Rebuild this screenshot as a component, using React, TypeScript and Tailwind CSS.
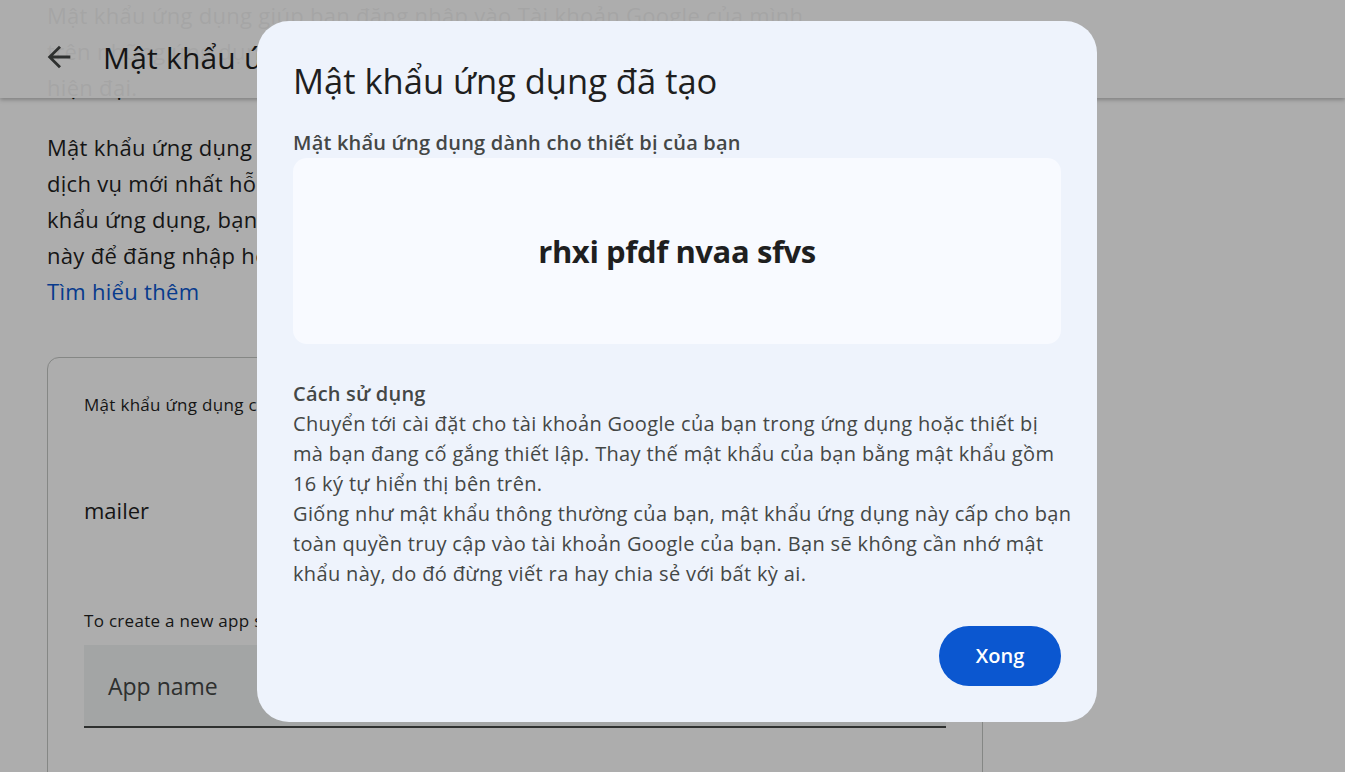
import React from "react";

const sans = { fontFamily: '"Open Sans", "Noto Sans", Arial, sans-serif' };

function BackArrow() {
  return (
    <svg width="34" height="34" viewBox="0 0 24 24" fill="#444746">
      <path d="M20 11H7.83l5.59-5.59L12 4l-8 8 8 8 1.41-1.41L7.83 13H20v-2z" />
    </svg>
  );
}

function PageBehind() {
  return (
    <div className="relative h-[772px] overflow-hidden bg-white" style={sans}>
      {/* sticky header over the scrolled text */}
      <div className="absolute top-0 left-0 right-0 z-10 h-[98px] bg-white/95 shadow-[0_2px_4px_rgba(0,0,0,0.25)] flex items-center pl-[42px] pt-[16px] gap-[27px]">
        <BackArrow />
        <h1 className="text-[30px] text-[#1f1f1f] tracking-[0.2px]">Mật khẩu ứng dụng</h1>
      </div>

      <div className="pl-[47px] text-[22px] leading-[36px] tracking-[0.3px] text-[#1f1f1f]">
        <div className="-mt-[3px] mb-[24px]">
          <div className="whitespace-nowrap">Mật khẩu ứng dụng giúp bạn đăng nhập vào Tài khoản Google của mình</div>
          <div className="whitespace-nowrap">trên những ứng dụng và dịch vụ cũ không hỗ trợ tiêu chuẩn bảo mật</div>
          <div className="whitespace-nowrap">hiện đại.</div>
        </div>
        <div className="mb-[48px]">
          <div className="whitespace-nowrap">Mật khẩu ứng dụng không được khuyến khích và không cần thiết</div>
          <div className="whitespace-nowrap">dịch vụ mới nhất hỗ trợ các tiêu chuẩn bảo mật. Nếu muốn dùng mật</div>
          <div className="whitespace-nowrap">khẩu ứng dụng, bạn cần bật tính năng Xác minh 2 bước cho tài khoản</div>
          <div className="whitespace-nowrap">này để đăng nhập hoặc dùng ứng dụng cũ.</div>
          <div className="text-[#0b57d0]">Tìm hiểu thêm</div>
        </div>

        <div className="w-[936px] h-[500px] border border-[#c4c7c5] rounded-[12px] px-[36px] pt-[35px] tracking-normal">
          <div className="text-[17px] leading-[24px] tracking-[0.3px] text-[#1f1f1f]">Mật khẩu ứng dụng của bạn</div>
          <div className="mt-[75px] text-[22px] leading-[36px] text-[#1f1f1f]">mailer</div>
          <div className="mt-[81px] text-[17px] leading-[24px] tracking-[0.3px] text-[#1f1f1f]">
            To create a new app specific password, type a name for it below
          </div>
          <div className="mt-[12px] h-[83px] bg-[#f1f3f4] border-b-2 border-[#444746] flex items-center pl-[24px] text-[23px] text-[#444746]">
            App name
          </div>
        </div>
      </div>
    </div>
  );
}

const usage1 = [
  "Chuyển tới cài đặt cho tài khoản Google của bạn trong ứng dụng hoặc thiết bị",
  "mà bạn đang cố gắng thiết lập. Thay thế mật khẩu của bạn bằng mật khẩu gồm",
  "16 ký tự hiển thị bên trên.",
];

const usage2 = [
  "Giống như mật khẩu thông thường của bạn, mật khẩu ứng dụng này cấp cho bạn",
  "toàn quyền truy cập vào tài khoản Google của bạn. Bạn sẽ không cần nhớ mật",
  "khẩu này, do đó đừng viết ra hay chia sẻ với bất kỳ ai.",
];

export default function App() {
  return (
    <div className="relative w-[1345px] h-[772px] overflow-hidden">
      <PageBehind />

      {/* scrim + dialog */}
      <div className="absolute inset-0 z-20 bg-black/[0.32] pl-[257px] pt-[21px]">
        <div
          className="w-[840px] h-[701px] bg-[#eef3fc] rounded-[32px] px-[36px] pt-[40px] flex flex-col"
          style={sans}
        >
          <h2 className="text-[34.5px] leading-[40px] text-[#1f1f1f]">Mật khẩu ứng dụng đã tạo</h2>
          <div className="mt-[30px] text-[20px] leading-[24px] tracking-[0.2px] font-semibold text-[#444746]">
            Mật khẩu ứng dụng dành cho thiết bị của bạn
          </div>
          <div className="mt-[3px] h-[186px] bg-[#f8faff] rounded-[14px] flex items-center justify-center">
            <span className="text-[31px] font-bold text-[#1f1f1f] tracking-[-0.4px]">rhxi pfdf nvaa sfvs</span>
          </div>
          <div className="mt-[35px] text-[20px] leading-[30px] tracking-[0.35px] text-[#444746]">
            <div className="font-semibold tracking-[0.2px]">Cách sử dụng</div>
            <div>
              {usage1.map((l) => (
                <div key={l} className="whitespace-nowrap">{l}</div>
              ))}
            </div>
            <div>
              {usage2.map((l) => (
                <div key={l} className="whitespace-nowrap">{l}</div>
              ))}
            </div>
          </div>
          <div className="mt-[37px] flex justify-end">
            <button className="w-[122px] h-[60px] rounded-full bg-[#0b57d0] text-white text-[20px] font-semibold">
              Xong
            </button>
          </div>
        </div>
      </div>
    </div>
  );
}
